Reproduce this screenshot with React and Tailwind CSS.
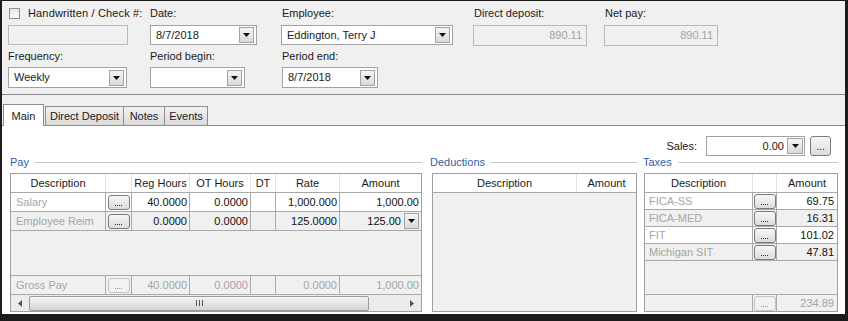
import React from 'react';

const FONT = { fontFamily: '"Liberation Sans", Arial, sans-serif' };

function DropBtn({ className = 'w-[15px] h-[16px]' }) {
  return (
    <div className={`${className} shrink-0 border border-[#a3a3a3] bg-linear-to-b from-[#f5f5f5] to-[#d9d9d9] flex items-center justify-center`}>
      <svg width="7" height="4" viewBox="0 0 7 4">
        <path d="M0 0H7L3.5 4Z" fill="#111" />
      </svg>
    </div>
  );
}

function Combo({ value, className }) {
  return (
    <div className={`${className} border border-[#a2a2a2] bg-white flex items-center pl-[5px] pr-[2px]`}>
      <span className="flex-1 truncate">{value}</span>
      <DropBtn />
    </div>
  );
}

function ReadBox({ value, className }) {
  return (
    <div className={`${className} border border-[#b9b9b9] bg-[#f0f0f0] flex items-center justify-end pr-[4px] text-[#a3a3a3]`}>
      {value}
    </div>
  );
}

function Dots({ disabled }) {
  return (
    <div
      className={`w-[22px] h-[15px] rounded-[3px] border flex items-end justify-center gap-[1px] pb-[3px] ${
        disabled ? 'border-[#c4c4c4] bg-[#f2f2f2]' : 'border-[#7a7a7a] bg-linear-to-b from-[#f7f7f7] to-[#dcdcdc]'
      }`}
    >
      {[0, 1, 2, 3].map((i) => (
        <span key={i} className={`w-[1px] h-[1px] ${disabled ? 'bg-[#9a9a9a]' : 'bg-[#333]'}`} />
      ))}
    </div>
  );
}

function GroupHeader({ title }) {
  return (
    <div className="h-[17px] flex items-start">
      <span className="text-[#2f5fa8] leading-[14px] mt-[-1px] pr-[6px]">{title}</span>
      <div className="flex-1 border-t border-[#c8c8c8] mt-[6px]" />
    </div>
  );
}

function HeadCell({ w, children, last }) {
  return (
    <div className={`${w} h-full flex items-center justify-center ${last ? '' : 'border-r border-[#e2e2e2]'}`}>
      {children}
    </div>
  );
}

const payCols = ['w-[95px]', 'w-[26px]', 'w-[58px]', 'w-[61px]', 'w-[25px]', 'w-[64px]', 'w-[81px]'];

function PayRow({ desc, reg, ot, rate, amount, bg, muted, drop, top }) {
  const txt = muted ? 'text-[#a5a5a5]' : 'text-[#111]';
  return (
    <div className={`h-[19px] flex ${bg} ${top ? 'border-t' : 'border-b'} border-[#a9a9a9]`}>
      <div className={`${payCols[0]} border-r border-[#a9a9a9] flex items-center pl-[5px] text-[#a5a5a5]`}>{desc}</div>
      <div className={`${payCols[1]} border-r border-[#a9a9a9] flex items-center justify-center`}>
        <Dots disabled={muted} />
      </div>
      <div className={`${payCols[2]} border-r border-[#a9a9a9] flex items-center justify-end pr-[2px] ${txt}`}>{reg}</div>
      <div className={`${payCols[3]} border-r border-[#a9a9a9] flex items-center justify-end pr-[2px] ${txt}`}>{ot}</div>
      <div className={`${payCols[4]} border-r border-[#a9a9a9]`} />
      <div className={`${payCols[5]} border-r border-[#a9a9a9] flex items-center justify-end pr-[2px] ${txt}`}>{rate}</div>
      <div className={`${payCols[6]} flex items-center justify-end pr-[2px] ${txt}`}>
        <span>{amount}</span>
        {drop && <DropBtn className="w-[15px] h-[16px] ml-[3px]" />}
      </div>
    </div>
  );
}

function TaxRow({ desc, amount, bg, muted, top }) {
  return (
    <div className={`h-[17px] flex ${bg} ${top ? 'border-t' : 'border-b'} border-[#a9a9a9]`}>
      <div className="w-[108px] border-r border-[#a9a9a9] flex items-center pl-[4px] text-[#a5a5a5]">{desc}</div>
      <div className="w-[24px] border-r border-[#a9a9a9] flex items-center justify-center">
        <Dots disabled={muted} />
      </div>
      <div className={`w-[60px] flex items-center justify-end pr-[3px] ${muted ? 'text-[#a5a5a5]' : 'text-[#111]'}`}>
        {amount}
      </div>
    </div>
  );
}

export default function App() {
  return (
    <div style={FONT} className="w-[848px] h-[321px] bg-[#1c1c1c] pt-[1px] pl-[2px] pr-[3px] pb-[7px] text-[11px] text-[#1a1a1a] whitespace-nowrap">
      <div className="h-full flex flex-col bg-[#f0f0f0]">
        {/* Header fields */}
        <div className="h-[94px] shrink-0 border-b border-[#8a8a8a] flex pl-[6px]">
          <div className="w-[120px] flex flex-col">
            <div className="h-[24px] flex items-center">
              <div className="w-[11px] h-[11px] shrink-0 ml-[1px] border border-[#8e8f8f] bg-linear-to-b from-[#e6e6e6] to-[#fafafa]" />
              <span className="ml-[8px] tracking-[0.15px]">Handwritten / Check #:</span>
            </div>
            <div className="h-[20px] w-[120px] border border-[#b9b9b9] bg-[#f0f0f0]" />
            <div className="h-[22px] flex items-center">Frequency:</div>
            <Combo value="Weekly" className="w-[119px] h-[21px]" />
          </div>
          <div className="ml-[22px] flex flex-col">
            <div className="h-[24px] flex items-center">Date:</div>
            <Combo value="8/7/2018" className="w-[107px] h-[20px]" />
            <div className="h-[22px] flex items-center">Period begin:</div>
            <Combo value="" className="w-[95px] h-[21px]" />
          </div>
          <div className="ml-[24px] flex flex-col">
            <div className="h-[24px] flex items-center pl-[1px]">Employee:</div>
            <Combo value="Eddington, Terry J" className="w-[172px] h-[20px]" />
            <div className="h-[22px] flex items-center pl-[1px]">Period end:</div>
            <Combo value="8/7/2018" className="w-[96px] h-[21px] ml-[1px]" />
          </div>
          <div className="ml-[20px] flex flex-col">
            <div className="h-[24px] flex items-center pl-[1px]">Direct deposit:</div>
            <ReadBox value="890.11" className="w-[114px] h-[21px]" />
          </div>
          <div className="ml-[17px] flex flex-col">
            <div className="h-[24px] flex items-center pl-[1px]">Net pay:</div>
            <ReadBox value="890.11" className="w-[114px] h-[21px]" />
          </div>
        </div>

        {/* Tabs */}
        <div className="h-[30px] shrink-0 flex items-end pl-[1px] relative z-10">
          <div className="w-[41px] h-[22px] mb-[-1px] bg-white border border-b-0 border-[#8c8c8c] flex items-start justify-center pt-[3px]">
            Main
          </div>
          <div className="w-[79px] h-[19px] ml-[1px] border border-b-0 border-[#8c8c8c] bg-linear-to-b from-[#f3f3f3] to-[#dadada] flex items-center justify-center">
            Direct Deposit
          </div>
          <div className="w-[42px] h-[19px] ml-[-1px] border border-b-0 border-[#8c8c8c] bg-linear-to-b from-[#f3f3f3] to-[#dadada] flex items-center justify-center">
            Notes
          </div>
          <div className="w-[44px] h-[19px] ml-[-1px] border border-b-0 border-[#8c8c8c] bg-linear-to-b from-[#f3f3f3] to-[#dadada] flex items-center justify-center">
            Events
          </div>
        </div>

        {/* Page */}
        <div className="flex-1 bg-white border-t border-[#8c8c8c] flex flex-col pt-[10px] pb-[2px]">
          <div className="h-[20px] flex justify-end items-center pr-[14px]">
            <span className="mr-[9px]">Sales:</span>
            <div className="w-[99px] h-[20px] border border-[#a2a2a2] bg-white flex items-center justify-end pr-[1px]">
              <span className="mr-[3px]">0.00</span>
              <DropBtn className="w-[16px] h-[16px]" />
            </div>
            <div className="w-[21px] h-[20px] ml-[5px] rounded-[3px] border border-[#7a7a7a] bg-linear-to-b from-[#f7f7f7] to-[#dcdcdc] flex items-end justify-center pb-[4px] leading-[8px] text-[10px]">
              ...
            </div>
          </div>

          <div className="flex pl-[8px]">
            {/* Pay */}
            <div className="w-[412px] flex flex-col">
              <GroupHeader title="Pay" />
              <div className="h-[139px] border border-[#a0a0a0] flex flex-col bg-[#f0f0f0]">
                <div className="h-[19px] flex bg-white border-b border-[#a9a9a9]">
                  <HeadCell w={payCols[0]}>Description</HeadCell>
                  <HeadCell w={payCols[1]} />
                  <HeadCell w={payCols[2]}>Reg Hours</HeadCell>
                  <HeadCell w={payCols[3]}>OT Hours</HeadCell>
                  <HeadCell w={payCols[4]}>DT</HeadCell>
                  <HeadCell w={payCols[5]}>Rate</HeadCell>
                  <HeadCell w={payCols[6]} last>Amount</HeadCell>
                </div>
                <PayRow desc="Salary" reg="40.0000" ot="0.0000" rate="1,000.000" amount="1,000.00" bg="bg-white" />
                <PayRow desc="Employee Reim" reg="0.0000" ot="0.0000" rate="125.0000" amount="125.00" bg="bg-[#f0f0f0]" drop />
                <div className="flex-1" />
                <div className="border-b border-[#a9a9a9]">
                  <PayRow desc="Gross Pay" reg="40.0000" ot="0.0000" rate="0.0000" amount="1,000.00" bg="bg-[#f0f0f0]" muted top />
                </div>
                <div className="h-[16px] flex items-center bg-[#ececec]">
                  <div className="w-[18px] flex justify-center">
                    <svg width="4" height="7" viewBox="0 0 4 7">
                      <path d="M4 0V7L0 3.5Z" fill="#555" />
                    </svg>
                  </div>
                  <div className="w-[340px] h-[15px] rounded-[2px] border border-[#9b9b9b] bg-linear-to-b from-[#f4f4f4] to-[#d6d6d6] flex items-center justify-center">
                    <div className="flex gap-[2px]">
                      <span className="w-[1px] h-[6px] bg-[#555]" />
                      <span className="w-[1px] h-[6px] bg-[#555]" />
                      <span className="w-[1px] h-[6px] bg-[#555]" />
                    </div>
                  </div>
                  <div className="flex-1 flex justify-end pr-[7px]">
                    <svg width="4" height="7" viewBox="0 0 4 7">
                      <path d="M0 0V7L4 3.5Z" fill="#555" />
                    </svg>
                  </div>
                </div>
              </div>
            </div>

            {/* Deductions */}
            <div className="w-[207px] ml-[8px] flex flex-col">
              <GroupHeader title="Deductions" />
              <div className="ml-[2px] w-[205px] h-[139px] border border-[#a0a0a0] flex flex-col bg-[#f0f0f0]">
                <div className="h-[19px] flex bg-white border-b border-[#a9a9a9]">
                  <HeadCell w="w-[144px]">Description</HeadCell>
                  <HeadCell w="w-[59px]" last>Amount</HeadCell>
                </div>
              </div>
            </div>

            {/* Taxes */}
            <div className="w-[195px] ml-[6px] flex flex-col">
              <GroupHeader title="Taxes" />
              <div className="ml-[1px] w-[194px] h-[139px] border border-[#a0a0a0] flex flex-col bg-[#f0f0f0]">
                <div className="h-[19px] flex bg-white border-b border-[#a9a9a9]">
                  <HeadCell w="w-[108px]">Description</HeadCell>
                  <HeadCell w="w-[24px]" />
                  <HeadCell w="w-[60px]" last>Amount</HeadCell>
                </div>
                <TaxRow desc="FICA-SS" amount="69.75" bg="bg-white" />
                <TaxRow desc="FICA-MED" amount="16.31" bg="bg-[#f0f0f0]" />
                <TaxRow desc="FIT" amount="101.02" bg="bg-white" />
                <TaxRow desc="Michigan SIT" amount="47.81" bg="bg-[#f0f0f0]" />
                <div className="flex-1" />
                <TaxRow desc="" amount="234.89" bg="bg-[#f0f0f0]" muted top />
              </div>
            </div>
          </div>
        </div>
      </div>
    </div>
  );
}
